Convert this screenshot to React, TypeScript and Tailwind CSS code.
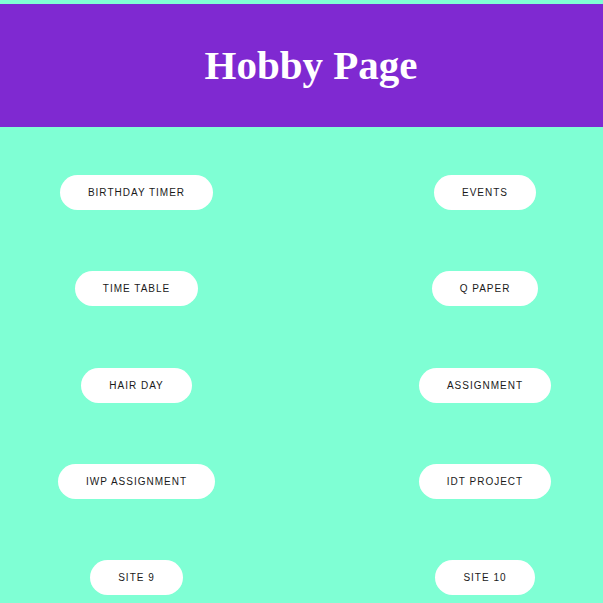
import React from 'react';

const rows: [string, string][] = [
  ['Birthday Timer', 'Events'],
  ['Time Table', 'Q Paper'],
  ['Hair Day', 'Assignment'],
  ['IWP Assignment', 'IDT Project'],
  ['Site 9', 'Site 10'],
];

function PillLink({ label }: { label: string }) {
  return (
    <a
      href="#"
      className="flex h-[35px] items-center rounded-full bg-white px-[28px] text-[10px] uppercase tracking-[1px] text-[#1a1a1a] font-['Liberation_Sans',Arial,sans-serif]"
    >
      {label}
    </a>
  );
}

export default function App() {
  return (
    <div className="min-h-[603px] bg-[#7fffd4] pt-[4px]">
      <header className="flex h-[123px] items-center justify-center bg-[#7f29d1] pl-[19px]">
        <h1 className="text-[41px] font-bold text-white font-['Liberation_Serif','Times_New_Roman',serif]">
          Hobby Page
        </h1>
      </header>
      <main className="flex flex-col gap-y-[61.25px] pt-[48px]">
        {rows.map(([left, right]) => (
          <div key={left} className="flex">
            <div className="flex w-[273px] justify-center">
              <PillLink label={left} />
            </div>
            <div className="ml-auto flex w-[236px] justify-center">
              <PillLink label={right} />
            </div>
          </div>
        ))}
      </main>
    </div>
  );
}
